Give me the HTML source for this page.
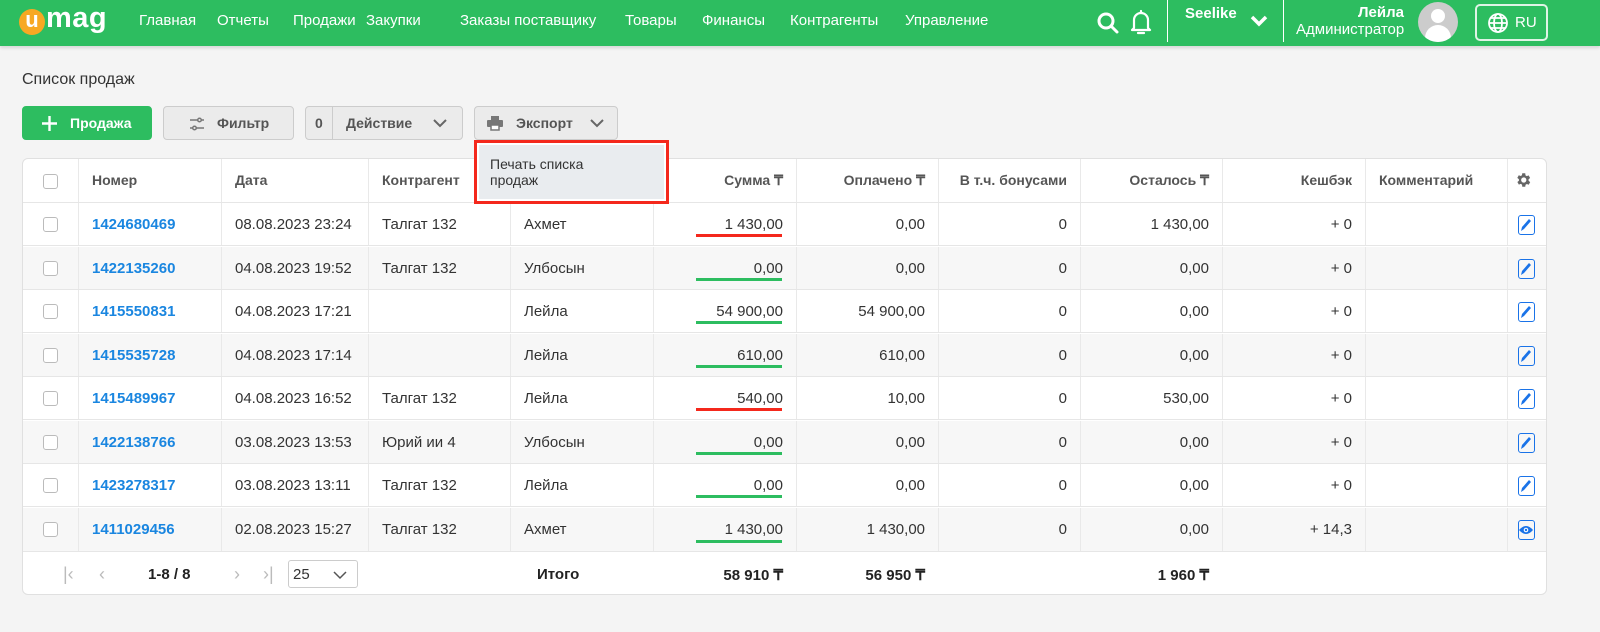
<!DOCTYPE html>
<html><head><meta charset="utf-8"><style>
*{box-sizing:border-box;margin:0;padding:0}
body{width:1600px;height:632px;background:#f4f4f4;font-family:"Liberation Sans",Arial,sans-serif;color:#333;position:relative;overflow:hidden}
.top{position:absolute;left:0;top:0;width:1600px;height:46px;background:#2dbd60;box-shadow:0 2px 3px rgba(0,0,0,.12)}
.nav{position:absolute;top:12px;color:#fff;font-size:15px}
.abs{position:absolute}
h1{position:absolute;left:22px;top:71px;font-size:16px;font-weight:normal;color:#333}
.btn{position:absolute;top:106px;height:34px;border:1px solid #ccc;border-radius:4px;background:#ebebeb;font-size:14px;color:#555;font-weight:bold}
.tbl{position:absolute;left:22px;top:158px;width:1525px;height:437px;background:#fff;border:1px solid #e0e0e0;border-radius:6px;overflow:hidden}
.row{position:absolute;left:0;width:1525px;height:44px;border-bottom:1px solid #e6e6e6}
.c{position:absolute;top:0;height:100%;border-left:1px solid #e9e9e9;font-size:15px;line-height:43px;padding:0 13px;white-space:nowrap}
.r{text-align:right}
.cb{position:absolute;left:20px;top:15px;width:15px;height:15px;border:1.5px solid #bbb;border-radius:3px;background:#fff}
.hd .c{color:#555;font-weight:bold;font-size:14px}
a{color:#1a86e0;font-weight:bold;text-decoration:none}
.ul{position:absolute;right:14px;bottom:8px;width:86px;height:3px}
.ic{position:absolute;top:12px;width:17px;height:20px;border:1.5px solid #1a73e8;border-radius:3px}
</style></head><body>
<div class="top">
 <div class="abs" style="left:19px;top:9px;width:26px;height:26px;border-radius:50%;background:#f7a823;color:#fff;font-weight:bold;font-size:22px;line-height:22px;text-align:center">u</div>
 <div class="abs" style="left:46px;top:2px;color:#fff;font-weight:bold;font-size:29px;letter-spacing:0.5px">mag</div>
 <div class="nav" style="left:139px">Главная</div>
 <div class="nav" style="left:217px">Отчеты</div>
 <div class="nav" style="left:293px">Продажи</div>
 <div class="nav" style="left:366px">Закупки</div>
 <div class="nav" style="left:460px">Заказы поставщику</div>
 <div class="nav" style="left:625px">Товары</div>
 <div class="nav" style="left:702px">Финансы</div>
 <div class="nav" style="left:790px">Контрагенты</div>
 <div class="nav" style="left:905px">Управление</div>
 <svg class="abs" style="left:1096px;top:11px" width="24" height="24" viewBox="0 0 24 24"><circle cx="10" cy="10" r="7" fill="none" stroke="#fff" stroke-width="3"/><path d="M15 15l6 6" stroke="#fff" stroke-width="3" stroke-linecap="round"/></svg>
 <svg class="abs" style="left:1130px;top:9px" width="22" height="27" viewBox="0 0 22 27"><path d="M4 19V11a7 7 0 0114 0v8l2 2H2z" fill="none" stroke="#fff" stroke-width="2.2" stroke-linejoin="round"/><path d="M8 24h6M11 2v2" stroke="#fff" stroke-width="2.2" stroke-linecap="round"/></svg>
 <div class="abs" style="left:1167px;top:0;width:1px;height:42px;background:#fff"></div>
 <div class="abs" style="left:1185px;top:5px;color:#fff;font-weight:bold;font-size:15px">Seelike</div>
 <svg class="abs" style="left:1250px;top:15px" width="18" height="12" viewBox="0 0 18 12"><path d="M2 2l7 7 7-7" fill="none" stroke="#fff" stroke-width="3.5"/></svg>
 <div class="abs" style="left:1283px;top:0;width:1px;height:42px;background:#fff"></div>
 <div class="abs" style="left:1296px;top:4px;color:#fff;font-size:15px;text-align:right;width:108px;line-height:17px"><b>Лейла</b><br>Администратор</div>
 <div class="abs" style="left:1418px;top:2px;width:40px;height:40px;border-radius:50%;background:#ccc;overflow:hidden"><div class="abs" style="left:13px;top:7px;width:14px;height:14px;border-radius:50%;background:#fff"></div><div class="abs" style="left:7px;top:23px;width:26px;height:20px;border-radius:13px 13px 0 0;background:#fff"></div></div>
 <div class="abs" style="left:1475px;top:4px;width:73px;height:37px;border:2px solid #e0f4e6;border-radius:5px;color:#fff;font-size:15px"><svg class="abs" style="left:10px;top:6px" width="22" height="22" viewBox="0 0 22 22" fill="none" stroke="#fff" stroke-width="1.8"><circle cx="11" cy="11" r="9"/><ellipse cx="11" cy="11" rx="4" ry="9"/><path d="M2 11h18M4 6h14M4 16h14"/></svg><span class="abs" style="left:38px;top:8px">RU</span></div>
</div>
<h1>Список продаж</h1>
<div class="btn" style="left:22px;width:130px;background:#2dbd60;border-color:#2dbd60;color:#fff"><svg class="abs" style="left:19px;top:9px" width="15" height="15"><path d="M7.5 0v15M0 7.5h15" stroke="#fff" stroke-width="2.4"/></svg><span class="abs" style="left:47px;top:8px">Продажа</span></div>
<div class="btn" style="left:163px;width:131px"><svg class="abs" style="left:25px;top:9px" width="16" height="16" viewBox="0 0 16 16" fill="none" stroke="#777" stroke-width="1.5"><path d="M1 4h8M12 4h3M1 12h3M7 12h8"/><circle cx="10.5" cy="4" r="1.8"/><circle cx="5.5" cy="12" r="1.8"/></svg><span class="abs" style="left:53px;top:8px">Фильтр</span></div>
<div class="btn" style="left:305px;width:158px"><span class="abs" style="left:9px;top:8px">0</span><div class="abs" style="left:26px;top:0;width:1px;height:32px;background:#ccc"></div><span class="abs" style="left:40px;top:8px">Действие</span><svg class="abs" style="left:126px;top:11px" width="16" height="10"><path d="M2 2l6 6 6-6" fill="none" stroke="#666" stroke-width="2"/></svg></div>
<div class="btn" style="left:474px;width:144px"><svg class="abs" style="left:12px;top:9px" width="16" height="15" viewBox="0 0 16 15" fill="#777"><rect x="4" y="0" width="8" height="4"/><rect x="0" y="4" width="16" height="7" rx="1"/><rect x="4" y="9" width="8" height="5" fill="#fff" stroke="#777" stroke-width="1.5"/></svg><span class="abs" style="left:41px;top:8px">Экспорт</span><svg class="abs" style="left:114px;top:11px" width="16" height="10"><path d="M2 2l6 6 6-6" fill="none" stroke="#666" stroke-width="2"/></svg></div>

<div class="tbl">
 <div class="row hd" style="top:0;height:44px">
  <div class="cb"></div>
  <div class="c" style="left:55px;width:143px">Номер</div>
  <div class="c" style="left:198px;width:147px">Дата</div>
  <div class="c" style="left:345px;width:142px">Контрагент</div>
  <div class="c" style="left:487px;width:143px"></div>
  <div class="c r" style="left:630px;width:143px">Сумма ₸</div>
  <div class="c r" style="left:773px;width:142px">Оплачено ₸</div>
  <div class="c r" style="left:915px;width:142px">В т.ч. бонусами</div>
  <div class="c r" style="left:1057px;width:142px">Осталось ₸</div>
  <div class="c r" style="left:1199px;width:143px">Кешбэк</div>
  <div class="c" style="left:1342px;width:142px">Комментарий</div>
  <div class="c" style="left:1484px;width:41px"><svg class="abs" style="left:6px;top:12px" width="18" height="18" viewBox="0 0 24 24" fill="#666"><path d="M19.4 13a7.5 7.5 0 000-2l2.1-1.6-2-3.5-2.5 1a7.6 7.6 0 00-1.700-1L15 3h-4l-.4 2.7a7.6 7.6 0 00-1.7 1l-2.5-1-2 3.5L6.6 11a7.5 7.5 0 000 2l-2.1 1.6 2 3.5 2.5-1a7.6 7.6 0 001.7 1L11 21h4l.4-2.7a7.6 7.6 0 001.7-1l2.5 1 2-3.5zM13 15.5a3.5 3.5 0 110-7 3.5 3.5 0 010 7z"/></svg></div>
 </div>
</div>
<script>
const rows=[["1424680469","08.08.2023 23:24","Талгат 132","Ахмет","1 430,00","0,00","0","1 430,00","+ 0",1,0],
["1422135260","04.08.2023 19:52","Талгат 132","Улбосын","0,00","0,00","0","0,00","+ 0",0,0],
["1415550831","04.08.2023 17:21","","Лейла","54 900,00","54 900,00","0","0,00","+ 0",0,0],
["1415535728","04.08.2023 17:14","","Лейла","610,00","610,00","0","0,00","+ 0",0,0],
["1415489967","04.08.2023 16:52","Талгат 132","Лейла","540,00","10,00","0","530,00","+ 0",1,0],
["1422138766","03.08.2023 13:53","Юрий ии 4","Улбосын","0,00","0,00","0","0,00","+ 0",0,0],
["1423278317","03.08.2023 13:11","Талгат 132","Лейла","0,00","0,00","0","0,00","+ 0",0,0],
["1411029456","02.08.2023 15:27","Талгат 132","Ахмет","1 430,00","1 430,00","0","0,00","+ 14,3",0,1]];
const edit='<svg class="abs" style="left:0px;top:1px" width="14" height="16" viewBox="0 0 14 16"><path d="M2 14l1-4 7-8 2 2-7 8z" fill="#1a73e8"/></svg>';
const eye='<svg class="abs" style="left:0px;top:3px" width="14" height="12" viewBox="0 0 14 12"><path d="M0 6q7-8 14 0q-7 8-14 0z" fill="#1a73e8"/><circle cx="7" cy="6" r="2.3" fill="#fff"/><circle cx="7" cy="6" r="1.2" fill="#1a73e8"/></svg>';
let h='';const tops=[44,88,131,175,218,262,305,349];
rows.forEach((r,i)=>{h+=`<div class="row" style="top:${tops[i]}px;height:${i==7?44:43}px;background:${i%2?'#f7f7f7':'#fff'}"><div class="cb" style="top:14px"></div>
<div class="c" style="left:55px;width:143px"><a>${r[0]}</a></div>
<div class="c" style="left:198px;width:147px">${r[1]}</div>
<div class="c" style="left:345px;width:142px">${r[2]}</div>
<div class="c" style="left:487px;width:143px">${r[3]}</div>
<div class="c r" style="left:630px;width:143px">${r[4]}<div class="ul" style="background:${r[9]?'#f4281c':'#2dbd60'}"></div></div>
<div class="c r" style="left:773px;width:142px">${r[5]}</div>
<div class="c r" style="left:915px;width:142px">${r[6]}</div>
<div class="c r" style="left:1057px;width:142px">${r[7]}</div>
<div class="c r" style="left:1199px;width:143px">${r[8]}</div>
<div class="c" style="left:1342px;width:142px"></div>
<div class="c" style="left:1484px;width:41px;padding:0"><div class="ic" style="left:10px">${r[10]?eye:edit}</div></div></div>`});
h+=`<div class="abs" style="left:40px;top:405px;color:#bbb;font-size:18px">|‹</div>
<div class="abs" style="left:76px;top:405px;color:#bbb;font-size:18px">‹</div>
<div class="abs" style="left:125px;top:407px;font-size:15px;font-weight:bold;color:#222">1-8 / 8</div>
<div class="abs" style="left:211px;top:405px;color:#bbb;font-size:18px">›</div>
<div class="abs" style="left:240px;top:405px;color:#bbb;font-size:18px">›|</div>
<div class="abs" style="left:265px;top:401px;width:70px;height:28px;border:1px solid #ccc;border-radius:3px;font-size:15px;padding:5px 4px">25<svg class="abs" style="left:44px;top:10px" width="14" height="9"><path d="M1 1l6 6 6-6" fill="none" stroke="#555" stroke-width="1.5"/></svg></div>
<div class="abs" style="left:514px;top:407px;font-size:15px;font-weight:bold;color:#222">Итого</div>
<div class="abs r" style="left:630px;width:130px;top:407px;font-size:15px;font-weight:bold;color:#222;text-align:right">58 910 ₸</div>
<div class="abs r" style="left:773px;width:129px;top:407px;font-size:15px;font-weight:bold;color:#222;text-align:right">56 950 ₸</div>
<div class="abs r" style="left:1057px;width:129px;top:407px;font-size:15px;font-weight:bold;color:#222;text-align:right">1 960 ₸</div>`;
document.querySelector('.tbl').insertAdjacentHTML('beforeend',h);
</script>
<div class="abs" style="left:474px;top:140px;width:195px;height:64px;border:3px solid #f4281c;background:#fff"><div class="abs" style="left:2px;top:2px;width:185px;height:54px;background:#e9ecef;font-size:14px;line-height:16px;padding:11px 0 0 11px;color:#333">Печать списка<br>продаж</div></div>
</body></html>
